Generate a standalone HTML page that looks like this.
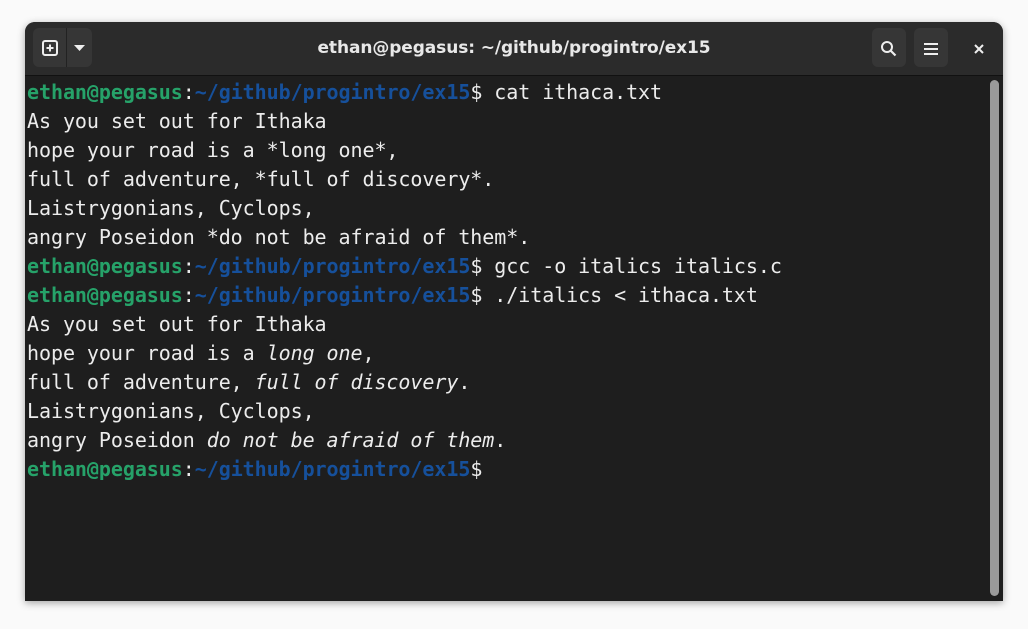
<!DOCTYPE html>
<html><head><style>
html,body{margin:0;padding:0;width:1028px;height:629px;background:#fafafa;overflow:hidden}
.win{position:absolute;left:25px;top:22px;width:978px;height:579px;background:#1e1e1e;border-radius:10px 10px 0 0;box-shadow:0 2px 8px rgba(0,0,0,.35);overflow:hidden}
.hdr{position:absolute;left:0;top:0;width:978px;height:53px;background:#2b2b2b;border-bottom:1px solid #111}
.title{position:absolute;left:0;right:0;top:16px;text-align:center;color:#e8e8e8;font:bold 17px "DejaVu Sans","Liberation Sans",sans-serif;letter-spacing:-0.1px}
.btn{position:absolute;top:6px;height:39px;background:#363636;border-radius:6px}
.term{position:absolute;left:2px;top:56px;font:20px/29px "DejaVu Sans Mono","Liberation Mono",monospace;color:#ececec;white-space:pre;letter-spacing:-0.06px}
.g{color:#26a269;font-weight:bold}.b{color:#16509b;font-weight:bold}
.sb{position:absolute;left:965px;top:58px;width:9px;height:516px;background:#9a9a9a;border-radius:5px}
i{font-style:oblique}
</style></head><body>
<div class="win">
<div class="hdr">
<div class="btn" style="left:8px;width:59px"></div>
<div style="position:absolute;left:41px;top:6px;width:1px;height:39px;background:#222"></div>
<svg style="position:absolute;left:17px;top:18px" width="16" height="16"><rect x="1" y="1" width="14" height="14" rx="2" fill="none" stroke="#eee" stroke-width="2"/><path d="M8 4.5v7M4.5 8h7" stroke="#eee" stroke-width="2"/></svg>
<svg style="position:absolute;left:49px;top:22px" width="12" height="8"><path d="M0 1h11L5.5 7z" fill="#eee"/></svg>
<div class="title">ethan@pegasus: ~/github/progintro/ex15</div>
<div class="btn" style="left:847px;width:34px"></div>
<div class="btn" style="left:889px;width:34px"></div>
<svg style="position:absolute;left:855px;top:18px" width="18" height="18"><circle cx="7" cy="7" r="5" fill="none" stroke="#eee" stroke-width="2"/><path d="M10.5 10.5l5 5" stroke="#eee" stroke-width="2.2"/></svg>
<svg style="position:absolute;left:898px;top:20px" width="16" height="14"><path d="M1 2h14M1 7h14M1 12h14" stroke="#eee" stroke-width="2"/></svg>
<svg style="position:absolute;left:949px;top:22px" width="10" height="10"><path d="M1 1l8 8M9 1l-8 8" stroke="#eee" stroke-width="2"/></svg>
</div>
<div class="term"><span class="g">ethan@pegasus</span>:<span class="b">~/github/progintro/ex15</span>$ cat ithaca.txt
As you set out for Ithaka
hope your road is a *long one*,
full of adventure, *full of discovery*.
Laistrygonians, Cyclops,
angry Poseidon *do not be afraid of them*.
<span class="g">ethan@pegasus</span>:<span class="b">~/github/progintro/ex15</span>$ gcc -o italics italics.c
<span class="g">ethan@pegasus</span>:<span class="b">~/github/progintro/ex15</span>$ ./italics &lt; ithaca.txt
As you set out for Ithaka
hope your road is a <i>long one</i>,
full of adventure, <i>full of discovery</i>.
Laistrygonians, Cyclops,
angry Poseidon <i>do not be afraid of them</i>.
<span class="g">ethan@pegasus</span>:<span class="b">~/github/progintro/ex15</span>$</div>
<div class="sb"></div>
</div>
</body></html>
